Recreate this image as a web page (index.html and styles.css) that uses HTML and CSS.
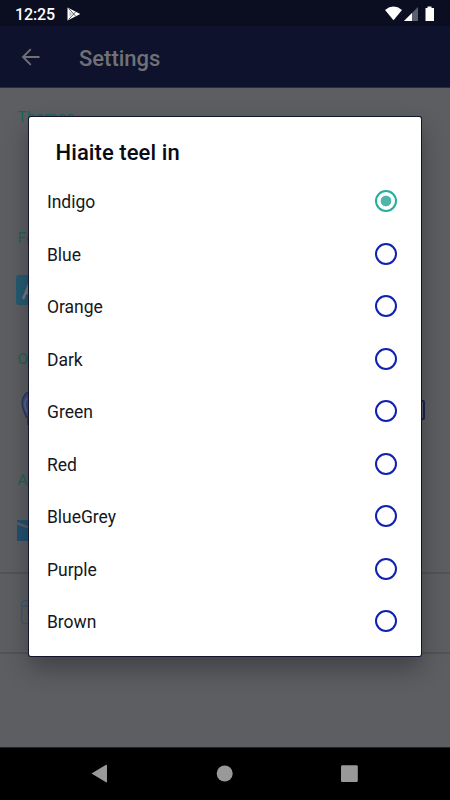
FILE: index.html
```html
<!DOCTYPE html>
<html lang="en">
<head>
<meta charset="utf-8">
<title>Settings</title>
<link rel="stylesheet" href="styles.css">
</head>
<body>
<div class="screen">
  <header class="status">
    <span class="clock">12:25</span>
    <svg class="play" width="14" height="14" viewBox="0 0 14 14"><path d="M.5.500v13L13.300 7z" fill="#fff"/><path d="M1.600 1.500L8.500 9M1.600 12.500L8.500 5" stroke="#0b0e20" stroke-width=".7"/><path d="M2.500 4.500v5L5.200 7z" fill="#b9bac0"/></svg>
    <svg class="signals" width="50" height="16" viewBox="0 0 50 16"><path d="M0 4Q8.500-2.800 17 4L8.500 14.200z" fill="#fff"/><path d="M33 1v14H19z" fill="#5c5f70"/><path d="M27 7v8h-8z" fill="#fff"/><path d="M42.500.5h4V2H49v13h-8.500V2h2z" fill="#fff"/></svg>
  </header>
  <div class="appbar">
    <svg class="back" width="20" height="18" viewBox="0 0 20 18"><path d="M18.500 9H2M9.800 1.200L2 9l7.800 7.800" fill="none" stroke="#707176" stroke-width="1.900"/></svg>
    <h1>Settings</h1>
  </div>
  <main class="settings">
    <section class="group"><h2>Themes</h2></section>
    <section class="group"><h2>Fo</h2>
      <svg class="icon" width="30" height="30" viewBox="0 0 30 30"><rect width="30" height="30" rx="3" fill="#255b70"/><path d="M7 24L14 7l7 17M10 18h8" fill="none" stroke="#717b83" stroke-width="2.500"/></svg>
    </section>
    <section class="group"><h2>O</h2>
      <svg class="icon bulb" width="24" height="38" viewBox="0 0 24 38"><path d="M12 0C5 0 1 6 1 12c0 6 3 10 4 14h14c1-4 4-8 4-14 0-6-4-12-11-12z" fill="#3e4c76" stroke="#293962" stroke-width="1.300"/><path d="M6 7C3 11 3 15 6 21" fill="none" stroke="#5b678a" stroke-width="1.500"/><path d="M6 25h12v9H6z" fill="#3d3a3b"/></svg>
      <span class="checkbox"></span>
    </section>
    <section class="group last"><h2>A</h2>
      <svg class="icon mail" width="28" height="22" viewBox="0 0 28 22"><path d="M0 0h28v2L14 7 0 2zM0 4.500l14 5 14-5v16.500H0z" fill="#23506f"/></svg>
    </section>
    <div class="item">
      <svg width="25" height="25" viewBox="0 0 25 25"><rect x=".7" y=".7" width="23" height="23" rx="3" fill="none" stroke="#385b72" stroke-width="1.300"/><path d="M1 6h23M6 12h4" stroke="#385b72" stroke-width="1.300"/></svg>
    </div>
  </main>
  <nav class="navbar">
    <svg width="450" height="53" viewBox="0 0 450 53" fill="#999"><path d="M91.500 26.500l14.600-8.700q.9-.4.900.6v16.400q0 1-.9.500z"/><circle cx="224.700" cy="26.500" r="8"/><rect x="341" y="18.300" width="16.800" height="16.800" rx="1.300"/></svg>
  </nav>
  <div class="dialog" role="dialog">
    <h3>Hiaite teel in</h3>
    <ul>
      <li><span class="name">Indigo</span><span class="radio on"></span></li>
      <li><span class="name">Blue</span><span class="radio"></span></li>
      <li><span class="name">Orange</span><span class="radio"></span></li>
      <li><span class="name">Dark</span><span class="radio"></span></li>
      <li><span class="name">Green</span><span class="radio"></span></li>
      <li><span class="name">Red</span><span class="radio"></span></li>
      <li><span class="name">BlueGrey</span><span class="radio"></span></li>
      <li><span class="name">Purple</span><span class="radio"></span></li>
      <li><span class="name">Brown</span><span class="radio"></span></li>
    </ul>
  </div>
</div>
</body>
</html>
```
FILE: styles.css
```css
* { box-sizing: border-box; }
body { margin: 0; font-family: Roboto, sans-serif; }
h1, h2, h3, ul { margin: 0; padding: 0; }
svg { display: block; flex: none; }

.screen {
  position: relative;
  width: 450px;
  height: 800px;
  overflow: hidden;
  display: flex;
  flex-direction: column;
  background: #5d5e62;
}
.status {
  height: 26px;
  flex: none;
  display: flex;
  align-items: center;
  padding: 1px 15px 0;
  background: #0b0e20;
  color: #fff;
}
.clock { font-size: 16px; font-weight: 500; letter-spacing: -.1px; line-height: 26px; padding-top: 2px; }
.play { margin-left: 12px; }
.signals { margin-left: auto; }

.appbar {
  height: 61.500px;
  flex: none;
  display: flex;
  align-items: center;
  padding: 1px 21px 0;
  background: #0f122c;
  border-bottom: 1px solid #272b49;
  color: #707176;
}
.appbar h1 { margin-left: 38px; font-size: 22px; font-weight: 500; line-height: 30px; padding-top: 4px; }

.settings { flex: 1; min-height: 0; }
.group { position: relative; height: 121.300px; padding: 19px 16px 0 17.500px; }
.group h2 { color: #1b6459; font-size: 15.500px; font-weight: 400; line-height: 20px; letter-spacing: .2px; }
.icon { margin: 27px 0 0 -2px; }
.bulb { margin: 22px 0 0 3px; }
.mail { margin: 30px 0 0 -1px; }
.checkbox {
  position: absolute;
  right: 25px;
  top: 70px;
  width: 20px;
  height: 20px;
  border: 2px solid #1c2350;
  border-radius: 2px;
}
.item {
  height: 82px;
  margin-top: -1px;
  display: flex;
  align-items: center;
  padding-left: 21px;
  border-top: 2px solid #525357;
  border-bottom: 2px solid #525357;
}

.navbar { height: 53px; flex: none; background: #000; border-top: 1px solid #242424; }
.navbar svg { margin-top: -1px; }

.dialog {
  position: absolute;
  left: 29px;
  top: 117px;
  width: 392px;
  height: 539px;
  background: #fff;
  border-radius: 2px;
  box-shadow: 0 0 0 1px #11142c, 0 12px 26px rgba(0, 0, 0, .32);
}
.dialog h3 { padding: 21px 26.500px 0; height: 58px; font-size: 22px; line-height: 30px; font-weight: 500; letter-spacing: .08px; color: #080a15; }
.dialog ul { list-style: none; }
.dialog li {
  height: 52.500px;
  display: flex;
  align-items: center;
  justify-content: space-between;
  padding: 0 24px 0 18px;
  font-size: 17.500px;
  letter-spacing: -.03px;
  color: #151722;
}
.name { padding-top: 2px; }
.radio { width: 22px; height: 22px; border: 2px solid #1020b0; border-radius: 50%; }
.radio.on { border-color: #26ad9d; background: radial-gradient(circle, #4db6ac 0 5px, transparent 5.700px); }
```
